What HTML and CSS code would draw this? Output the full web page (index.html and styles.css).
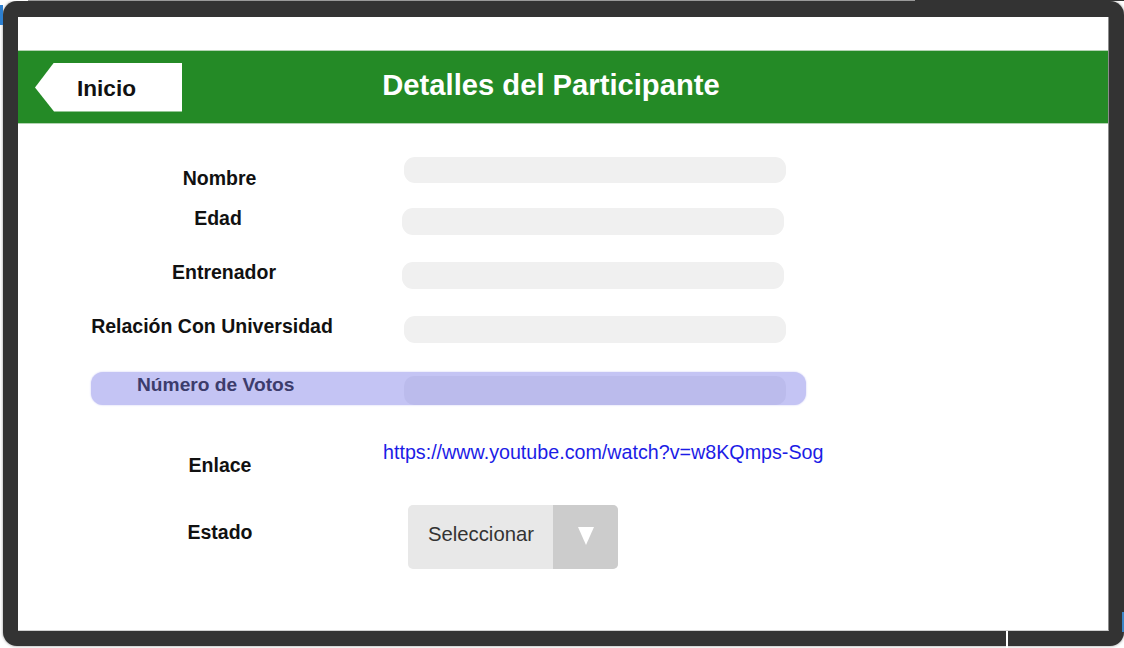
FILE: index.html
```html
<!DOCTYPE html>
<html lang="es">
<head>
<meta charset="utf-8">
<title>Detalles del Participante</title>
<link rel="stylesheet" href="styles.css">
</head>
<body>
<div class="page">
  <div class="deco-top"></div>
  <div class="deco-blue-left"></div>
  <div class="deco-blue-right"></div>
  <div class="deco-seam"></div>
  <div class="frame">
    <div class="screen">
      <div class="topgap"></div>
      <header class="bar">
        <a class="back">Inicio</a>
        <h1 class="title">Detalles del Participante</h1>
      </header>
      <div class="form">
        <div class="row r1">
          <div class="label l-nombre">Nombre</div>
          <div class="field f-404"></div>
        </div>
        <div class="row r2">
          <div class="label">Edad</div>
          <div class="field f-402"></div>
        </div>
        <div class="row r3">
          <div class="label l-entrenador">Entrenador</div>
          <div class="field f-402"></div>
        </div>
        <div class="row r4">
          <div class="label l-relacion">Relación Con Universidad</div>
          <div class="field f-404"></div>
        </div>
        <div class="votes">
          <div class="votes-label">Número de Votos</div>
          <div class="votes-field"></div>
        </div>
        <div class="row r-link">
          <div class="label l-shift">Enlace</div>
          <a class="link">https://www.youtube.com/watch?v=w8KQmps-Sog</a>
        </div>
        <div class="row r-state">
          <div class="label l-shift">Estado</div>
          <div class="select">
            <div class="sel-text">Seleccionar</div>
            <div class="sel-btn">
              <svg width="16" height="18" viewBox="0 0 16 18"><polygon points="0,0 16,0 8,18" fill="#ffffff"/></svg>
            </div>
          </div>
        </div>
      </div>
    </div>
  </div>
</div>
</body>
</html>
```

FILE: styles.css
```css
html, body {
  margin: 0;
  padding: 0;
  background: #ffffff;
}

body {
  font-family: "Liberation Sans", Arial, sans-serif;
}

.page {
  position: relative;
  width: 1124px;
  height: 648px;
  overflow: hidden;
  box-sizing: border-box;
  padding: 1px 0 0 3px;
}

.deco-top {
  position: absolute;
  top: 0;
  left: 0;
  width: 1124px;
  height: 1px;
  background: linear-gradient(to right, #ffffff 0, #ffffff 28px, #9a9a9a 28px, #9a9a9a 915px, #333333 915px);
  z-index: 2;
}

.deco-blue-left {
  position: absolute;
  top: 5px;
  left: 0;
  width: 3px;
  height: 20px;
  background: #2d7fcf;
  z-index: 2;
}

.deco-blue-right {
  position: absolute;
  top: 612px;
  right: 0;
  width: 2px;
  height: 20px;
  background: #3a86c8;
  z-index: 2;
}

.deco-seam {
  position: absolute;
  top: 631px;
  left: 1006px;
  width: 2px;
  height: 17px;
  background: #ffffff;
  z-index: 2;
}

.frame {
  width: 1121px;
  height: 645px;
  box-sizing: border-box;
  padding: 16px 15px 15px 15px;
  background: #333333;
  border-radius: 14px;
  box-shadow: 0 0 3px rgba(0, 0, 0, 0.45);
}

.screen {
  width: 1091px;
  height: 614px;
  box-sizing: border-box;
  background: #ffffff;
  border-right: 1px solid #8c8c8c;
  border-bottom: 1px solid #cfcfcf;
}

.topgap {
  height: 33px;
}

.bar {
  height: 74px;
  box-sizing: border-box;
  background: #248a26;
  border-top: 1px solid #b2d3b2;
  border-bottom: 1px solid #b2d3b2;
  display: flex;
  align-items: center;
  padding: 0 188px 0 17px;
}

.back {
  width: 147px;
  height: 49px;
  box-sizing: border-box;
  flex: none;
  background: #ffffff;
  clip-path: polygon(19px 0, 147px 0, 147px 49px, 19px 49px, 0 25px);
  display: flex;
  align-items: center;
  padding: 3px 0 0 42px;
  font-size: 22.6px;
  font-weight: 700;
  color: #111111;
  text-decoration: none;
}

.title {
  flex: 1;
  margin: 0;
  padding-bottom: 4px;
  text-align: center;
  color: #ffffff;
  font-size: 29.2px;
  font-weight: 700;
  line-height: 34px;
}

.form {
  padding: 33px 0 0 73px;
}

.row {
  display: flex;
  align-items: flex-start;
}

.label {
  width: 254px;
  flex: none;
  box-sizing: border-box;
  text-align: center;
  font-size: 19.5px;
  font-weight: 700;
  line-height: 22px;
  color: #111111;
}

.l-nombre {
  padding-left: 3px;
}

.l-entrenador {
  padding-left: 12px;
}

.l-relacion {
  padding-right: 12px;
}

.l-shift {
  padding-left: 4px;
}

.field {
  width: 382px;
  height: 27px;
  background: #f0f0f0;
  border-radius: 11px;
}

.f-404 {
  margin-left: 59px;
}

.f-402 {
  margin-left: 57px;
}

.r1 {
  height: 50px;
}

.r1 .label {
  margin-top: 10px;
}

.r1 .field {
  height: 26px;
}

.r2,
.r3 {
  height: 54px;
}

.r4 {
  height: 57px;
}

.r2 .field,
.r3 .field,
.r4 .field {
  margin-top: 1px;
}

.votes {
  width: 715px;
  height: 33px;
  box-sizing: border-box;
  background: #c4c4f4;
  border-radius: 12px;
  box-shadow: 0 0 2px #c4c4f4;
  display: flex;
  align-items: flex-start;
}

.votes-label {
  width: 313px;
  flex: none;
  box-sizing: border-box;
  padding-left: 46px;
  margin-top: 2px;
  font-size: 19.2px;
  font-weight: 700;
  line-height: 22px;
  color: #3c3c6c;
}

.votes-field {
  width: 382px;
  height: 29px;
  margin-top: 4px;
  background: #bbbbec;
  border-radius: 10px;
}

.r-link {
  margin-top: 35px;
  height: 65px;
}

.r-link .label {
  margin-top: 14px;
}

.link {
  margin-left: 38px;
  font-size: 19.7px;
  line-height: 24px;
  color: #1c1ce6;
  text-decoration: none;
  white-space: nowrap;
}

.r-state .label {
  margin-top: 16px;
}

.select {
  margin-left: 63px;
  width: 210px;
  height: 64px;
  display: flex;
  border-radius: 5px;
  overflow: hidden;
  background: #e8e8e8;
}

.sel-text {
  flex: 1;
  display: flex;
  align-items: center;
  padding: 0 0 5px 20px;
  font-size: 20.3px;
  color: #333333;
}

.sel-btn {
  width: 65px;
  flex: none;
  background: #cccccc;
  display: flex;
  align-items: center;
  justify-content: center;
  padding-bottom: 2px;
  box-sizing: border-box;
}

.sel-btn svg {
  display: block;
}
```
